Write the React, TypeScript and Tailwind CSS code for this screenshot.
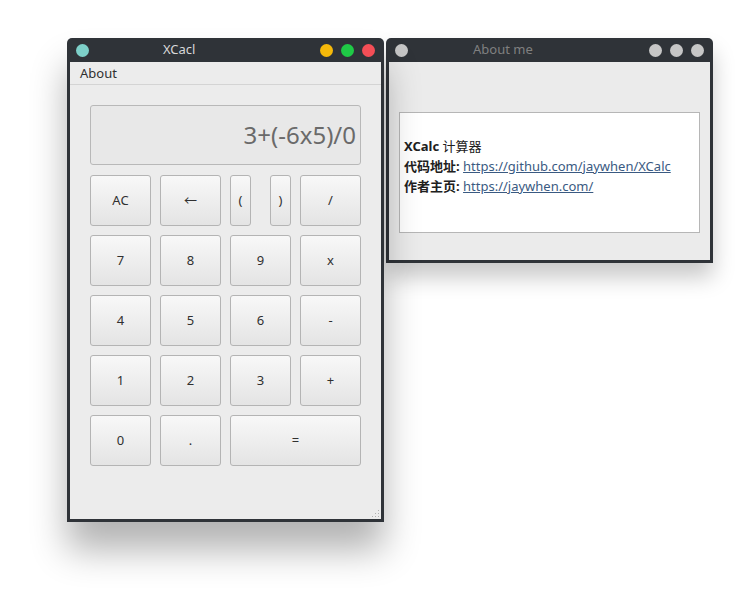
import React from 'react';

const font = { fontFamily: '"Noto Sans", "Noto Sans CJK SC", sans-serif' };

function Dot({ color }: { color: string }) {
  return <span className={`block h-[13px] w-[13px] shrink-0 rounded-full ${color}`} />;
}

function Key({ label, className = '' }: { label: string; className?: string }) {
  return (
    <button
      type="button"
      className={`flex h-[51px] items-center justify-center rounded-[3px] border border-[#b4b4b4] bg-gradient-to-b from-[#f8f8f8] to-[#e4e4e4] text-[13px] text-[#303030] ${className}`}
    >
      {label}
    </button>
  );
}

function CalcWindow() {
  const rows = [
    ['7', '8', '9', 'x'],
    ['4', '5', '6', '-'],
    ['1', '2', '3', '+'],
  ];
  return (
    <div className="absolute left-[67px] top-[38px] z-10 flex h-[484px] w-[317px] flex-col rounded-t-[5px] bg-[#2f3338] px-[3px] pb-[3px] shadow-[0_28px_36px_rgba(0,0,0,0.3)]">
      {/* title bar */}
      <div className="flex h-[24px] shrink-0 items-center pl-[6px] pr-[6px]">
        <Dot color="bg-[#7dd0c9]" />
        <span className="ml-[74px] text-[13px] text-[#d8d8d8]">XCacl</span>
        <div className="ml-auto flex gap-[8px]">
          <Dot color="bg-[#f6b90a]" />
          <Dot color="bg-[#1fca46]" />
          <Dot color="bg-[#f44e56]" />
        </div>
      </div>
      <div className="relative flex flex-1 flex-col bg-[#ececec]">
        <div className="flex h-[23px] items-center border-b border-[#d4d4d4] pl-[10px] pt-[1px] text-[13px] text-[#303030]">
          About
        </div>
        <div className="px-[20px] pt-[20px]">
          <div className="flex h-[60px] items-center justify-end rounded-[3px] border border-[#b8b8b8] bg-[#e8e8e8] pr-[4px] text-[24px] text-[#6a6a6a]">
            3+(-6x5)/0
          </div>
          <div className="mt-[10px] grid grid-cols-4 gap-[9px]">
            <Key label="AC" />
            <Key label="←" className="text-[11px]" />
            <div className="flex justify-between">
              <Key label="(" className="w-[21px]" />
              <Key label=")" className="w-[21px]" />
            </div>
            <Key label="/" />
            {rows.flat().map((k) => (
              <Key key={k} label={k} />
            ))}
            <Key label="0" />
            <Key label="." />
            <Key label="=" className="col-span-2" />
          </div>
        </div>
        {/* resize grip */}
        <svg className="absolute bottom-[1px] right-[1px]" width="10" height="10" viewBox="0 0 10 10">
          {[
            [8, 2], [8, 5], [5, 5], [8, 8], [5, 8], [2, 8],
          ].map(([x, y], i) => (
            <rect key={i} x={x} y={y} width="1" height="1" fill="#b0b0b0" />
          ))}
        </svg>
      </div>
    </div>
  );
}

function AboutWindow() {
  return (
    <div className="absolute left-[386px] top-[38px] flex h-[225px] w-[327px] flex-col rounded-t-[5px] bg-[#2f3338] px-[3px] pb-[3px] shadow-[0_14px_22px_rgba(0,0,0,0.22)]">
      <div className="flex h-[24px] shrink-0 items-center pl-[6px] pr-[6px]">
        <Dot color="bg-[#c6c6c6]" />
        <span className="ml-[65px] text-[13px] text-[#808080]">About me</span>
        <div className="ml-auto flex gap-[8px]">
          <Dot color="bg-[#c6c6c6]" />
          <Dot color="bg-[#c6c6c6]" />
          <Dot color="bg-[#c6c6c6]" />
        </div>
      </div>
      <div className="flex-1 bg-[#ebebeb] px-[10px] pt-[50px]">
        <div className="flex h-[121px] flex-col border border-[#b6b6b6] bg-white pl-[4px] pt-[23px] text-[13px] leading-[20px] text-[#202020]">
          <p>
            <b>XCalc</b> 计算器
          </p>
          <p>
            <b>代码地址:</b>{' '}
            <a className="text-[#3a5a82] underline" href="#">
              https://github.com/jaywhen/XCalc
            </a>
          </p>
          <p>
            <b>作者主页:</b>{' '}
            <a className="text-[#3a5a82] underline" href="#">
              https://jaywhen.com/
            </a>
          </p>
        </div>
      </div>
    </div>
  );
}

export default function App() {
  return (
    <div className="relative h-[609px] w-[746px] overflow-hidden bg-white" style={font}>
      <AboutWindow />
      <CalcWindow />
    </div>
  );
}
